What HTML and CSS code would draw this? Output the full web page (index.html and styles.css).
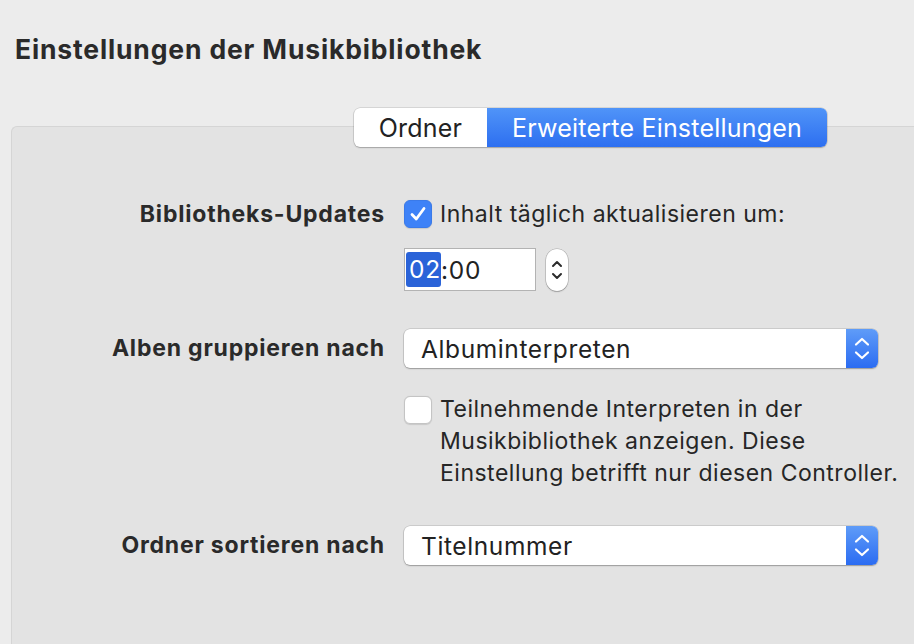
FILE: index.html
```html
<!DOCTYPE html>
<html lang="de">
<head>
<meta charset="utf-8">
<title>Einstellungen der Musikbibliothek</title>
<link rel="stylesheet" href="styles.css">
</head>
<body>
<header class="header">
  <h1 class="title">Einstellungen der Musikbibliothek</h1>
</header>
<div class="tabs-row">
  <div class="segmented">
    <div class="seg">Ordner</div>
    <div class="seg seg-active">Erweiterte Einstellungen</div>
  </div>
</div>
<section class="panel">
  <div class="form">
    <div class="label label-top">Bibliotheks-Updates</div>
    <div class="control">
      <div class="check-line">
        <span class="checkbox checked"><svg viewBox="0 0 28 28" width="28" height="28"><path d="M8 14.5 L12.3 19 L20 8.5" fill="none" stroke="#fff" stroke-width="2.8" stroke-linecap="round" stroke-linejoin="round"/></svg></span>
        <span class="check-text">Inhalt täglich aktualisieren um:</span>
      </div>
      <div class="time-row">
        <div class="time-field"><span class="sel">02</span>:00</div>
        <div class="stepper"><svg viewBox="0 0 22 42" width="22" height="42"><path d="M7 17 L11 13 L15 17" fill="none" stroke="#2b2b2b" stroke-width="2" stroke-linecap="round" stroke-linejoin="round"/><path d="M7 25 L11 29 L15 25" fill="none" stroke="#2b2b2b" stroke-width="2" stroke-linecap="round" stroke-linejoin="round"/></svg></div>
      </div>
    </div>

    <div class="label row2">Alben gruppieren nach</div>
    <div class="popup row2">
      <span class="popup-text">Albuminterpreten</span>
      <span class="popup-btn"><svg viewBox="0 0 32 39" width="32" height="39"><path d="M10 15.5 L16 10 L22 15.5" fill="none" stroke="#fff" stroke-width="2.2" stroke-linecap="round" stroke-linejoin="round"/><path d="M10 23.5 L16 29 L22 23.5" fill="none" stroke="#fff" stroke-width="2.2" stroke-linecap="round" stroke-linejoin="round"/></svg></span>
    </div>

    <div class="spacer"></div>
    <div class="check-para">
      <span class="checkbox"></span>
      <p class="para">Teilnehmende Interpreten in der<br>Musikbibliothek anzeigen. Diese<br>Einstellung betrifft nur diesen Controller.</p>
    </div>

    <div class="label row3">Ordner sortieren nach</div>
    <div class="popup row3">
      <span class="popup-text">Titelnummer</span>
      <span class="popup-btn"><svg viewBox="0 0 32 39" width="32" height="39"><path d="M10 15.5 L16 10 L22 15.5" fill="none" stroke="#fff" stroke-width="2.2" stroke-linecap="round" stroke-linejoin="round"/><path d="M10 23.5 L16 29 L22 23.5" fill="none" stroke="#fff" stroke-width="2.2" stroke-linecap="round" stroke-linejoin="round"/></svg></span>
    </div>
  </div>
</section>
</body>
</html>
```

FILE: styles.css
```css
html, body {
  margin: 0;
  padding: 0;
  background: #ececec;
  overflow: hidden;
  width: 914px;
  height: 644px;
}
body {
  font-family: Inter, "Noto Sans", "Liberation Sans", sans-serif;
  color: #262626;
}
.header {
  height: 108px;
  box-sizing: border-box;
  padding: 32px 0 0 15px;
}
.title {
  margin: 0;
  font-size: 26.5px;
  line-height: 34px;
  font-weight: 700;
  color: #2a2a2a;
  letter-spacing: 0.85px;
}
.tabs-row {
  display: flex;
  padding-left: 354px;
  margin-bottom: -21px;
  position: relative;
  z-index: 1;
}
.segmented {
  display: flex;
  height: 39px;
  border-radius: 6px;
  box-shadow: 0 0 0 0.5px rgba(0,0,0,0.18), 0 1px 1.5px rgba(0,0,0,0.22);
  background: #fff;
  overflow: hidden;
}
.seg {
  display: flex;
  align-items: center;
  justify-content: center;
  font-size: 25px;
  letter-spacing: 0.2px;
  color: #222;
  width: 133px;
  box-sizing: border-box;
}
.seg-active {
  width: 340px;
  padding-left: 0;
  color: #fff;
  background: linear-gradient(#5094f8, #2d6ff0);
}
.panel {
  margin-left: 11px;
  width: 903px;
  height: 518px;
  background: #e3e3e3;
  border-top: 1px solid #d5d5d5;
  border-left: 1px solid #d5d5d5;
  border-top-left-radius: 6px;
  box-sizing: border-box;
  padding-top: 72px;
}
.form {
  display: grid;
  grid-template-columns: 373px 474px;
  column-gap: 19px;
  align-items: start;
}
.label {
  text-align: right;
  font-weight: 700;
  font-size: 23px;
  letter-spacing: 0.8px;
  color: #2a2a2a;
  white-space: nowrap;
}
.label-top {
  line-height: 30px;
}
.check-line {
  display: flex;
  align-items: center;
  height: 30px;
  gap: 8px;
}
.checkbox {
  display: block;
  width: 28px;
  height: 28px;
  box-sizing: border-box;
  border-radius: 6px;
  background: #fff;
  border: 1px solid #c4c4c4;
  box-shadow: 0 0.5px 1px rgba(0,0,0,0.12);
  flex: none;
}
.checkbox.checked {
  background: #3e82f7;
  border-color: #3a7ae9;
}
.checkbox svg {
  display: block;
  margin: -1px;
}
.check-text {
  font-size: 23px;
  letter-spacing: 0.5px;
  color: #262626;
}
.time-row {
  display: flex;
  margin-top: 19px;
  gap: 10px;
  align-items: center;
}
.time-field {
  width: 132px;
  height: 43px;
  box-sizing: border-box;
  background: #fff;
  border: 1px solid #b3b3b3;
  display: flex;
  align-items: center;
  font-size: 24.5px;
  letter-spacing: 0.8px;
  padding-left: 1px;
  color: #222;
}
.sel {
  background: #2a63d8;
  color: #fff;
  border-radius: 3px;
  padding: 3px 0 3px 3px;
  line-height: 29px;
}
.stepper {
  width: 22px;
  height: 42px;
  border-radius: 11px;
  background: #fff;
  box-shadow: 0 0 0 0.5px rgba(0,0,0,0.25), 0 1px 1.5px rgba(0,0,0,0.2);
}
.stepper svg { display: block; }
.row2 {
  margin-top: 38px;
}
.label.row2 {
  line-height: 39px;
}
.popup {
  height: 39px;
  width: 474px;
  box-sizing: border-box;
  background: #fff;
  border-radius: 6px;
  box-shadow: 0 0 0 0.5px rgba(0,0,0,0.2), 0 1px 1.5px rgba(0,0,0,0.25);
  display: flex;
  align-items: center;
  overflow: hidden;
}
.popup-text {
  flex: 1;
  padding-left: 17px;
  font-size: 24.5px;
  letter-spacing: 0.6px;
  color: #222;
}
.popup-btn {
  width: 32px;
  height: 39px;
  background: linear-gradient(#5f9cf8, #2b6cf2);
}
.popup-btn svg { display: block; }
.check-para {
  margin-top: 25px;
  display: flex;
  gap: 8px;
  align-items: flex-start;
}
.check-para .checkbox {
  margin-top: 3px;
}
.para {
  margin: 0;
  font-size: 23px;
  letter-spacing: 0.5px;
  line-height: 32px;
  color: #262626;
  white-space: nowrap;
}
.row3 {
  margin-top: 37px;
}
.label.row3 {
  line-height: 39px;
}
```
